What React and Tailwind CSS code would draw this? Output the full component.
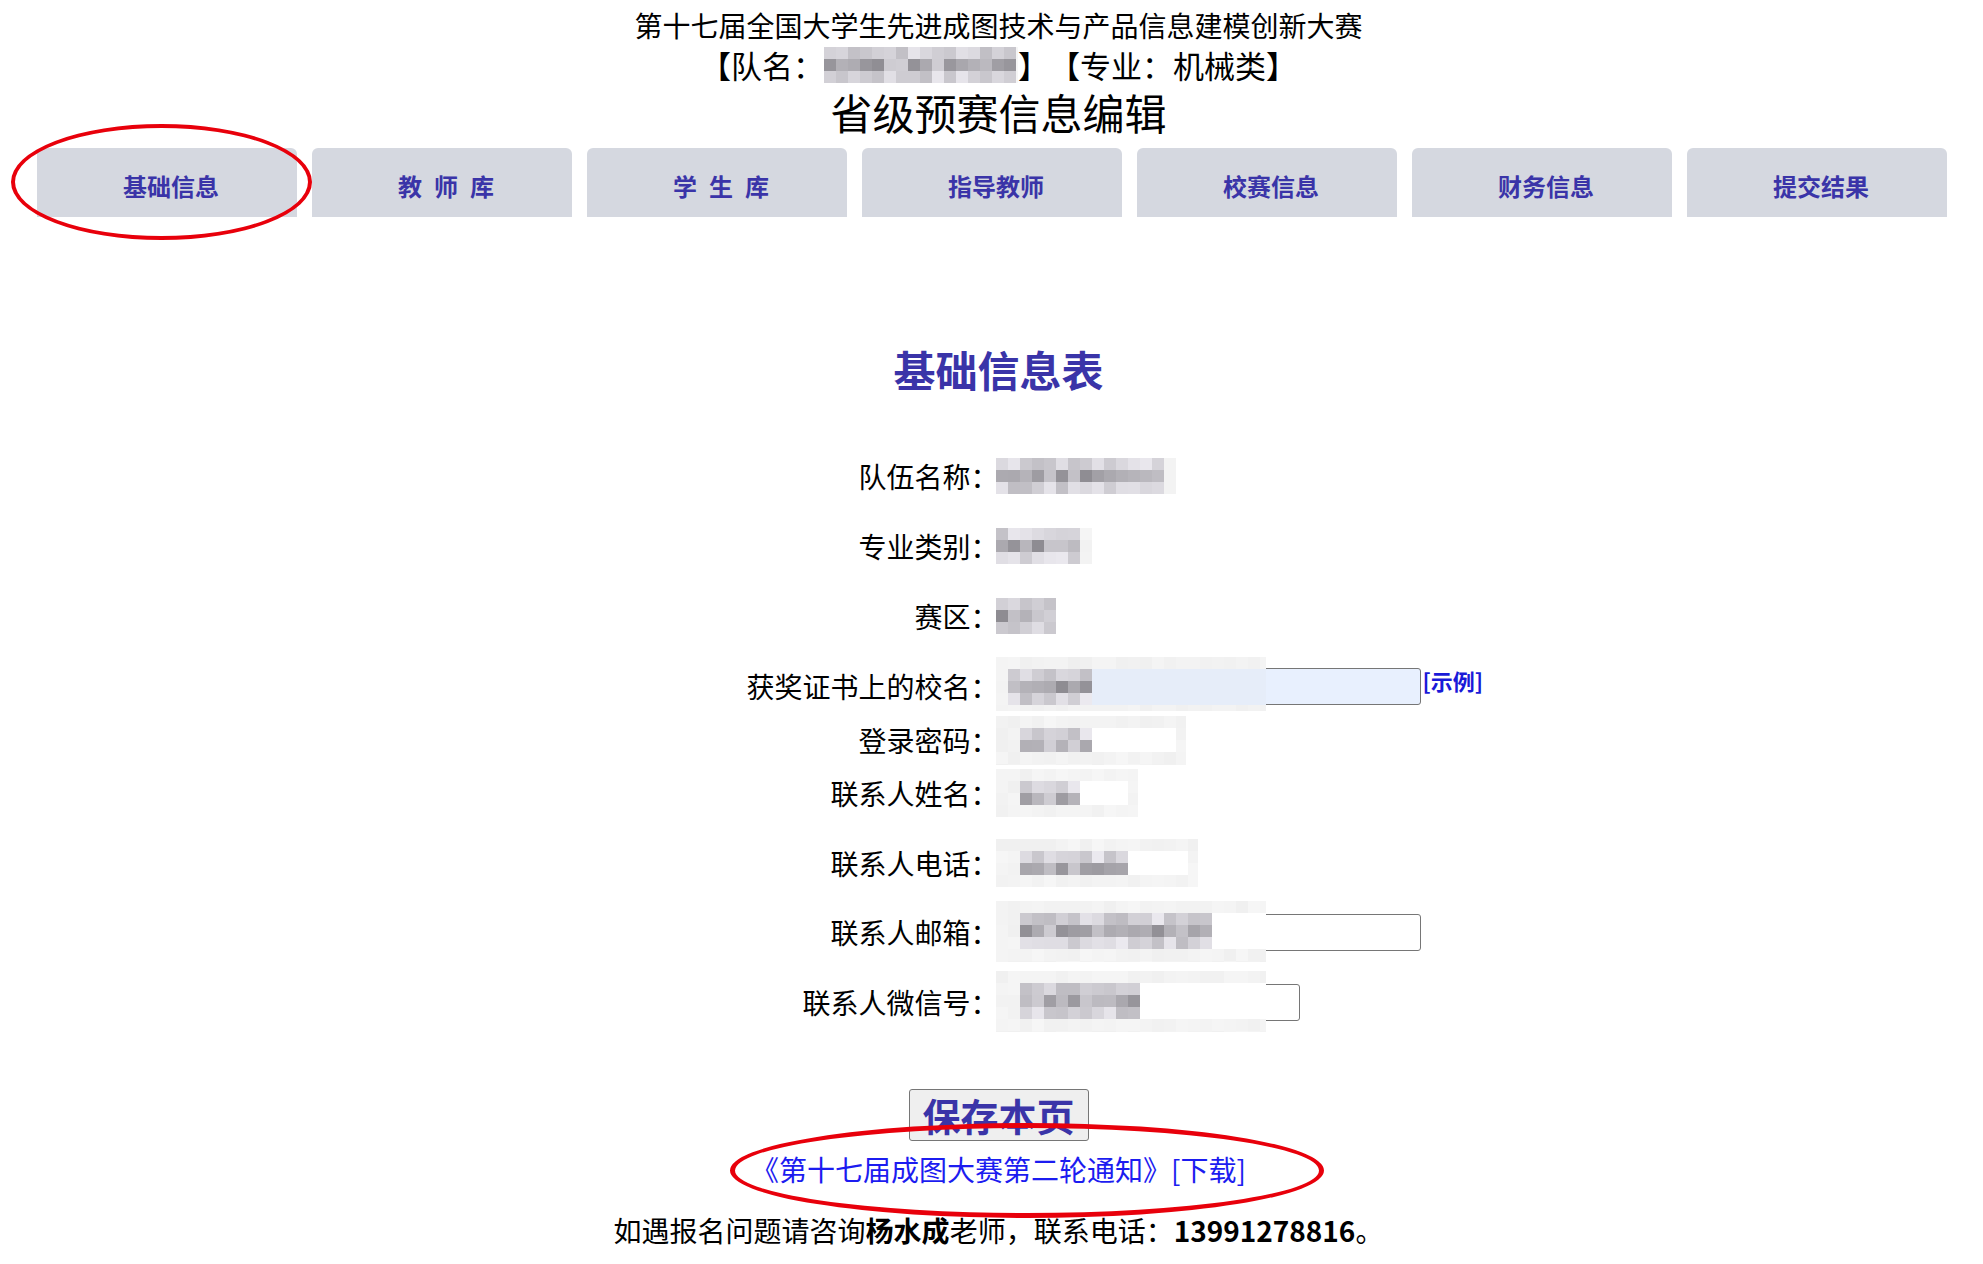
import React from 'react';

const tabs = ['基础信息', '教\u2002师\u2002库', '学\u2002生\u2002库', '指导教师', '校赛信息', '财务信息', '提交结果'];

// small deterministic noise for the pixelated (redacted) areas
function noise(seed) {
  let s = seed;
  return () => {
    s = (s * 9301 + 49297) % 233280;
    return s / 233280;
  };
}

function Mosaic({ w, h, seed, text = [0, 0, 0, 0], inner = null, innerColor = '#ffffff', edge = 244 }) {
  const size = 12;
  const cols = Math.ceil(w / size);
  const rows = Math.ceil(h / size);
  const r = noise(seed);
  const cells = [];
  for (let y = 0; y < rows; y++) {
    for (let x = 0; x < cols; x++) {
      let c;
      const inText = x >= text[0] && x < text[2] && y >= text[1] && y < text[3];
      const inInner = inner && x >= inner[0] && x < inner[2] && y >= inner[1] && y < inner[3];
      if (inText) {
        const mid = y === text[1] + 1 || text[3] - text[1] === 1;
        const v = Math.round(mid ? 140 + r() * 70 : 190 + r() * 45);
        c = `rgb(${v},${v - 2},${v + 4})`;
      } else if (inInner) {
        c = innerColor;
      } else {
        const v = Math.round(edge + r() * 6 - 3);
        c = `rgb(${v},${v},${v})`;
      }
      cells.push(c);
    }
  }
  return (
    <div className="shrink-0 overflow-hidden" style={{ width: w, height: h }}>
      <div className="grid" style={{ gridTemplateColumns: `repeat(${cols}, 12px)`, gridAutoRows: '12px' }}>
        {cells.map((c, i) => (
          <div key={i} style={{ backgroundColor: c }} />
        ))}
      </div>
    </div>
  );
}

function Row({ h, label, children }) {
  return (
    <div className={`flex items-center ${h}`}>
      <div className="w-1/2 text-right text-[28px] leading-none text-black">{label}</div>
      <div className="relative ml-[-3px] flex w-1/2 items-center">{children}</div>
    </div>
  );
}

export default function App() {
  return (
    <div className="relative min-h-[1264px] bg-white text-black [text-spacing-trim:space-all]" style={{ fontFamily: '"Noto Sans CJK SC", "Noto Sans", sans-serif' }}>
      <header className="pl-[14px] pt-[6px] text-center">
        <div className="text-[28px] leading-[39px]">第十七届全国大学生先进成图技术与产品信息建模创新大赛</div>
        <div className="flex items-center justify-center text-[31px] leading-[39px]">
          <span>【队名：</span>
          <Mosaic w={194} h={36} seed={7} text={[0, 0, 16, 3]} />
          <span>】【专业：机械类】</span>
        </div>
        <div className="text-[42px] leading-[56px]">省级预赛信息编辑</div>
      </header>

      <nav className="mt-[8px] flex gap-[15px] pl-[37px]">
        {tabs.map((t) => (
          <div key={t} className="flex h-[69px] w-[260px] items-center justify-center rounded-t-[6px] bg-[#d5d8e0] pl-[8px] pt-[6px] text-[24px] font-bold text-[#3a34a8]">
            {t}
          </div>
        ))}
      </nav>
      <div className="absolute left-[11px] top-[124px] h-[116px] w-[301px] rounded-[50%] border-[4px] border-[#e8000b]" />

      <main className="pl-[14px]">
        <h1 className="mt-[122px] text-center text-[42px] font-bold leading-[60px] text-[#3a34a8]">基础信息表</h1>

        <div className="mt-[42px] flex flex-col">
          <Row h="h-[70px]" label="队伍名称：">
            <Mosaic w={180} h={36} seed={11} text={[0, 0, 14, 3]} />
          </Row>
          <Row h="h-[70px]" label="专业类别：">
            <Mosaic w={96} h={36} seed={23} text={[0, 0, 7, 3]} />
          </Row>
          <Row h="h-[70px]" label="赛区：">
            <Mosaic w={60} h={36} seed={31} text={[0, 0, 5, 3]} />
          </Row>
          <Row h="h-[70px]" label="获奖证书上的校名：">
            <div className="flex items-center">
              <div className="relative h-[37px] w-[425px] rounded-[3px] border border-[#767676] bg-[#e8f0fe]">
                <div className="absolute left-[-1px] top-[-12px]">
                  <Mosaic w={270} h={54} seed={41} text={[1, 1, 8, 4]} inner={[1, 1, 23, 4]} innerColor="#e6edf9" edge={242} />
                </div>
              </div>
              <a className="ml-[2px] mt-[-12px] text-[22px] font-bold leading-none text-[#1a1ad8]">[示例]</a>
            </div>
          </Row>
          <Row h="h-[38px]" label="登录密码：">
            <Mosaic w={190} h={49} seed={53} text={[2, 1, 8, 3]} inner={[2, 1, 15, 3]} edge={243} />
          </Row>
          <Row h="h-[68px]" label="联系人姓名：">
            <Mosaic w={142} h={48} seed={61} text={[2, 1, 7, 3]} inner={[2, 1, 11, 3]} edge={243} />
          </Row>
          <Row h="h-[72px]" label="联系人电话：">
            <Mosaic w={202} h={48} seed={71} text={[2, 1, 11, 3]} inner={[2, 1, 16, 3]} edge={243} />
          </Row>
          <Row h="h-[66px]" label="联系人邮箱：">
            <div className="relative h-[37px] w-[425px] rounded-[3px] border border-[#767676] bg-white">
              <div className="absolute left-[-1px] top-[-14px]">
                <Mosaic w={270} h={61} seed={83} text={[2, 1, 18, 4]} inner={[2, 1, 23, 4]} edge={243} />
              </div>
            </div>
          </Row>
          <Row h="h-[74px]" label="联系人微信号：">
            <div className="relative h-[37px] w-[304px] rounded-[3px] border border-[#767676] bg-white">
              <div className="absolute left-[-1px] top-[-14px]">
                <Mosaic w={270} h={61} seed={97} text={[2, 1, 12, 4]} inner={[2, 1, 23, 4]} edge={243} />
              </div>
            </div>
          </Row>
        </div>

        <div className="mt-[50px] flex justify-center">
          <button className="flex h-[52px] w-[180px] items-center justify-center rounded-[3px] border border-[#767676] bg-[#efefef] text-[38px] font-bold leading-none text-[#3a34a8]">
            保存本页
          </button>
        </div>
        <div className="mt-[8px] text-center text-[28px] leading-[40px] text-[#1c1cf0]">
          <a>《第十七届成图大赛第二轮通知》</a>
          <a>[下载]</a>
        </div>
        <div className="mt-[21px] text-center text-[28px] leading-[40px] text-black">
          如遇报名问题请咨询<b>杨水成</b>老师，联系电话：<b>13991278816</b>。
        </div>
      </main>

      <div className="absolute left-[730px] top-[1123px] h-[95px] w-[594px] rounded-[50%] border-[5px] border-[#e8000b]" />
    </div>
  );
}
